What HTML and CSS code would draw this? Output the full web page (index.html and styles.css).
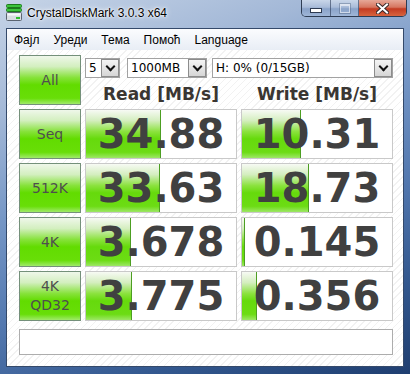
FILE: index.html
```html
<!DOCTYPE html>
<html lang="sr">

<head>
  <meta charset="UTF-8">
  <meta name="viewport" content="width=device-width, initial-scale=1.0">
  <title>CrystalDiskMark 3.0.3 x64</title>
  <link rel="stylesheet" href="styles.css">
</head>

<body>
  <div class="window">
    <!-- naslovna traka -->
    <div class="titlebar">
      <svg class="app-icon" width="16" height="17" viewBox="0 0 16 17">
        <rect x="0.5" y="0.5" width="15" height="3" rx="1" fill="#3cc43c" stroke="#1d7a1d" />
        <rect x="0.5" y="4.5" width="15" height="3" rx="1" fill="#3cc43c" stroke="#1d7a1d" />
        <rect x="0.5" y="8.5" width="15" height="8" rx="1" fill="#d8dde3" stroke="#5b6470" />
        <rect x="1.5" y="9.5" width="13" height="2" fill="#f6f8fa" />
        <rect x="10" y="13" width="4" height="2" fill="#2fbf2f" />
      </svg>
      <span class="title">CrystalDiskMark 3.0.3 x64</span>
      <div class="controls">
        <div class="ctl ctl-min"><span class="glyph-min"></span></div>
        <div class="ctl ctl-max"><span class="glyph-max"></span></div>
        <div class="ctl ctl-close">
          <svg width="13" height="11" viewBox="0 0 13 11">
            <path d="M2 1.5 L11 9.5 M11 1.5 L2 9.5" stroke="#3b2a2a" stroke-width="4" stroke-linecap="square" />
            <path d="M2 1.5 L11 9.5 M11 1.5 L2 9.5" stroke="#fff" stroke-width="2" stroke-linecap="square" />
          </svg>
        </div>
      </div>
    </div>

    <div class="client">
      <div class="menubar">
        <span class="menu-item">Фајл</span>
        <span class="menu-item">Уреди</span>
        <span class="menu-item">Тема</span>
        <span class="menu-item">Помоћ</span>
        <span class="menu-item">Language</span>
      </div>

      <div class="board">
        <div class="btn btn-all">All</div>

        <div class="combos">
          <div class="combo combo-count"><span class="combo-text">5</span><span class="combo-arrow"></span></div>
          <div class="combo combo-size"><span class="combo-text">1000MB</span><span class="combo-arrow"></span></div>
          <div class="combo combo-drive"><span class="combo-text">H: 0% (0/15GB)</span><span class="combo-arrow"></span></div>
        </div>

        <div class="head">Read [MB/s]</div>
        <div class="head">Write [MB/s]</div>

        <div class="btn">Seq</div>
        <div class="cell"><div class="bar" style="width: 75px"></div><span class="num">34.88</span></div>
        <div class="cell"><div class="bar" style="width: 59px"></div><span class="num">10.31</span></div>

        <div class="btn">512K</div>
        <div class="cell"><div class="bar" style="width: 74px"></div><span class="num">33.63</span></div>
        <div class="cell"><div class="bar" style="width: 67px"></div><span class="num">18.73</span></div>

        <div class="btn">4K</div>
        <div class="cell"><div class="bar" style="width: 45px"></div><span class="num">3.678</span></div>
        <div class="cell"><div class="bar" style="width: 3px"></div><span class="num">0.145</span></div>

        <div class="btn btn-two">4K<br>QD32</div>
        <div class="cell"><div class="bar" style="width: 46px"></div><span class="num">3.775</span></div>
        <div class="cell"><div class="bar" style="width: 15px"></div><span class="num">0.356</span></div>

        <div class="status"></div>
      </div>
    </div>
  </div>
</body>

</html>
```

FILE: styles.css
```css
body {
  margin: 0;
  font-family: "Liberation Sans", Arial, sans-serif;
}

/* okvir prozora (Aero) */
.window {
  width: 410px;
  height: 374px;
  box-sizing: border-box;
  padding: 0 6px 7px 6px;
  display: flex;
  flex-direction: column;
  background: linear-gradient(160deg, #c6d4e7 0%, #a3b8d7 22%, #7697c6 42%, #5479b0 62%, #33588f 82%, #1f3e70 100%);
}

.titlebar {
  height: 28px;
  display: flex;
  align-items: flex-start;
  flex-shrink: 0;
}

.app-icon {
  margin-top: 4px;
  flex-shrink: 0;
}

.title {
  margin: 6px 0 0 5px;
  font-size: 12px;
  color: #000;
  text-shadow: 0 0 6px #fff, 0 0 3px #fff, 0 0 1px #fff;
}

.controls {
  margin-left: auto;
  margin-right: -3px;
  display: flex;
  height: 16px;
  border: 1px solid rgba(28, 40, 62, 0.85);
  border-top: none;
  border-radius: 0 0 5px 5px;
  overflow: hidden;
}

.ctl {
  display: flex;
  align-items: center;
  justify-content: center;
}

.ctl-min,
.ctl-max {
  width: 28px;
  background: linear-gradient(#c9d6e9 0%, #a9bcd9 45%, #8aa3c9 55%, #9fb6d8 100%);
  border-right: 1px solid rgba(40, 55, 85, 0.6);
}

.ctl-max {
  width: 27px;
}

.ctl-close {
  width: 47px;
  background: linear-gradient(#e6a898 0%, #d67660 45%, #c33b22 55%, #d8643e 100%);
}

.glyph-min {
  width: 10px;
  height: 3px;
  margin-top: 5px;
  background: #fff;
  border: 1px solid #2e3b52;
}

.glyph-max {
  width: 8px;
  height: 6px;
  border: 1px solid rgba(255, 255, 255, 0.55);
  border-top-width: 2px;
  box-shadow: 0 0 0 1px rgba(60, 80, 110, 0.35);
}

/* klijentska oblast */
.client {
  flex: 1;
  display: flex;
  flex-direction: column;
  border: 1px solid #34496a;
  background: #fff;
}

.menubar {
  height: 21px;
  display: flex;
  align-items: center;
  padding-left: 0;
  background: linear-gradient(#fbfcfe, #e8edf5);
  font-size: 12px;
  color: #000;
}

.menu-item {
  padding: 0 7px;
}

.board {
  flex: 1;
  padding: 5px 0 0 12px;
  display: grid;
  grid-template-columns: 62px 152px 152px;
  grid-template-rows: 24px 22px repeat(4, 50px) 30px;
  gap: 4px;
  align-content: start;
  background: repeating-linear-gradient(135deg, #ffffff 0 4px, #f2f2f2 4px 5px);
}

/* zeleni tasteri */
.btn {
  box-sizing: border-box;
  border: 1px solid #74907a;
  background: linear-gradient(#eff7ea 0%, #d3efbf 22%, #86e23a 45%, #62dc00 60%, #68de08 88%, #a0ea6a 100%);
  display: flex;
  align-items: center;
  justify-content: center;
  text-align: center;
  font-family: "DejaVu Sans", Verdana, sans-serif;
  font-size: 14px;
  color: #4e4e4e;
}

.btn-all {
  grid-row: 1 / 3;
}

.btn-two {
  line-height: 19px;
}

/* padajuce liste */
.combos {
  grid-column: 2 / 4;
  display: flex;
  align-items: flex-start;
  padding-top: 3px;
}

.combo {
  box-sizing: border-box;
  height: 20px;
  border: 1px solid #a2a2a2;
  background: #fff;
  display: flex;
  align-items: center;
  justify-content: space-between;
  font-family: "DejaVu Sans", Verdana, sans-serif;
  font-size: 12px;
  color: #000;
}

.combo-text {
  padding-left: 3px;
}

.combo-count {
  width: 35px;
}

.combo-size {
  width: 80px;
  margin-left: 7px;
}

.combo-drive {
  width: 181px;
  margin-left: 5px;
}

.combo-arrow {
  box-sizing: border-box;
  width: 18px;
  height: 18px;
  border: 1px solid #8c8c8c;
  background: linear-gradient(#f4f4f4, #d6d6d6);
  position: relative;
}

.combo-arrow::after {
  content: "";
  position: absolute;
  left: 5px;
  top: 3px;
  width: 5px;
  height: 5px;
  border-right: 2px solid #111;
  border-bottom: 2px solid #111;
  transform: rotate(45deg);
}

.head {
  display: flex;
  align-items: center;
  justify-content: center;
  font-family: "DejaVu Sans", Verdana, sans-serif;
  font-weight: bold;
  font-size: 17px;
  color: #3a3632;
}

/* rezultati */
.cell {
  position: relative;
  box-sizing: border-box;
  border: 1px solid #c9c9c9;
  background: #fff;
  display: flex;
  align-items: center;
  justify-content: center;
}

.bar {
  position: absolute;
  left: 0;
  top: 0;
  bottom: 0;
  box-sizing: border-box;
  border-right: 1px solid #4c9e22;
  background: linear-gradient(#f7faf4 0%, #d4eebf 22%, #8be23e 45%, #66da0c 60%, #6cdc14 88%, #9de766 100%);
}

.num {
  position: relative;
  font-family: "DejaVu Sans", Verdana, sans-serif;
  font-weight: bold;
  font-size: 40px;
  line-height: 1;
  color: #404040;
}

.status {
  grid-column: 1 / 4;
  margin-top: 4px;
  box-sizing: border-box;
  border: 1px solid #adadad;
  background: #fff;
}
```
